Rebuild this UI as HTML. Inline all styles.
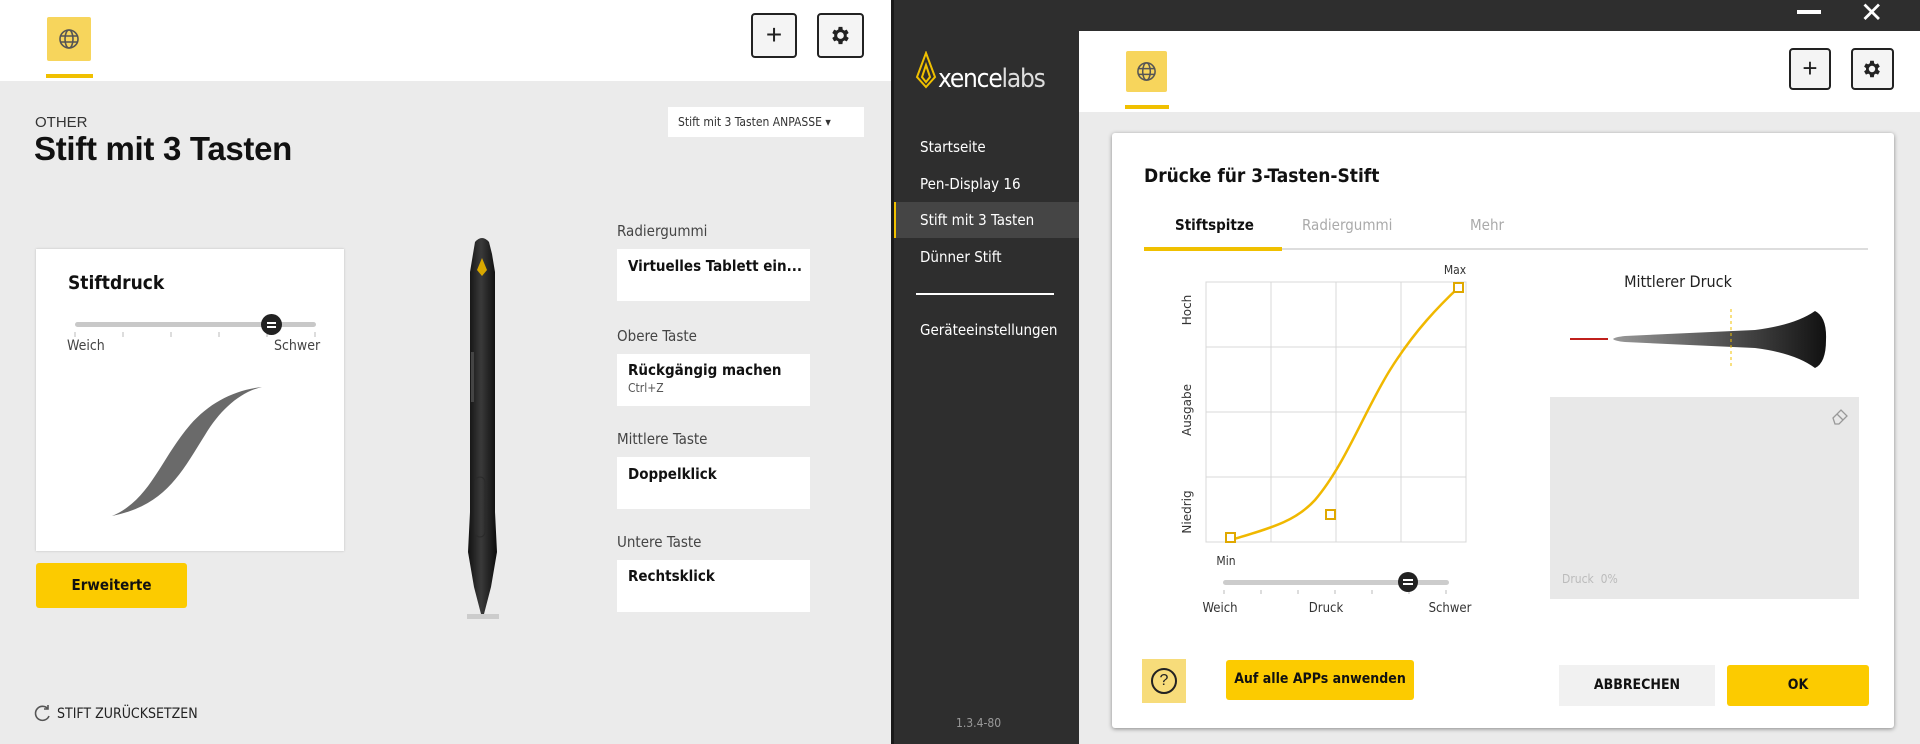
<!DOCTYPE html>
<html><head><meta charset="utf-8"><style>
*{margin:0;padding:0;box-sizing:border-box}
body{width:1920px;height:744px;overflow:hidden;background:#ebebeb;font-family:"Liberation Sans",sans-serif;position:relative}
.a{position:absolute}
.o{font-family:"DejaVu Sans Condensed","Liberation Sans",sans-serif}
.btn{position:absolute;border:2px solid #222;border-radius:4px;background:#f4f4f4}
.box{position:absolute;background:#fff}
.lab{position:absolute;font-size:15px;color:#444;font-family:"DejaVu Sans Condensed","Liberation Sans",sans-serif}
.bt{position:absolute;font-size:15px;font-weight:bold;color:#111;font-family:"DejaVu Sans Condensed","Liberation Sans",sans-serif}
.side{position:absolute;left:920px;color:#fff;font-size:15px;font-family:"DejaVu Sans Condensed","Liberation Sans",sans-serif}
</style></head><body>
<!-- LEFT PANEL -->
<div class="a" style="left:0;top:0;width:891px;height:81px;background:#fff"></div>
<div class="a" style="left:47px;top:17px;width:44px;height:44px;background:#f7d55c;border-radius:2px"></div>
<svg class="a" style="left:58px;top:28px" width="22" height="22" viewBox="0 0 22 22" fill="none" stroke="#555" stroke-width="1.6"><circle cx="11" cy="11" r="9"/><ellipse cx="11" cy="11" rx="4" ry="9"/><line x1="2" y1="8" x2="20" y2="8"/><line x1="2" y1="14" x2="20" y2="14"/></svg>
<div class="a" style="left:46px;top:74px;width:47px;height:4px;background:#f0c000"></div>
<div class="btn" style="left:751px;top:13px;width:46px;height:45px"></div>
<div class="a" style="left:751px;top:13px;width:46px;height:45px;font-size:28px;text-align:center;line-height:43px;color:#222">+</div>
<div class="btn" style="left:817px;top:13px;width:47px;height:45px"></div>
<svg class="a" style="left:829px;top:24px" width="23" height="23" viewBox="0 0 24 24"><path fill="#222" d="M19.4 13a7.5 7.5 0 000-2l2.1-1.6-2-3.5-2.5 1a7.5 7.5 0 00-1.7-1L15 3h-4l-.4 2.9a7.5 7.5 0 00-1.7 1l-2.5-1-2 3.5L6.5 11a7.5 7.5 0 000 2l-2.1 1.6 2 3.5 2.5-1a7.5 7.5 0 001.7 1L11 21h4l.4-2.9a7.5 7.5 0 001.7-1l2.5 1 2-3.5zM13 15.5a3.5 3.5 0 110-7 3.5 3.5 0 010 7z" transform="translate(-1 0)"/></svg>

<div class="a" style="left:35px;top:114px;font-size:15px;color:#333">OTHER</div>
<div class="a" style="left:34px;top:130px;font-size:33px;font-weight:bold;color:#111;letter-spacing:-0.3px">Stift mit 3 Tasten</div>
<div class="box" style="left:668px;top:107px;width:196px;height:30px"></div>
<div class="a o" style="left:678px;top:115px;font-size:12px;color:#333">Stift mit 3 Tasten ANPASSE ▾</div>

<div class="box" style="left:36px;top:249px;width:308px;height:302px;box-shadow:0 0 2px #bbb"></div>
<div class="bt" style="left:68px;top:272px;font-size:19px">Stiftdruck</div>
<div class="a" style="left:75px;top:322px;width:241px;height:5px;background:#c8c8c8;border-radius:3px"></div>
<svg class="a" style="left:74px;top:332px" width="245" height="8"><g stroke="#bbb"><line x1="1" y1="0" x2="1" y2="5"/><line x1="49" y1="0" x2="49" y2="5"/><line x1="97" y1="0" x2="97" y2="5"/><line x1="145" y1="0" x2="145" y2="5"/><line x1="193" y1="0" x2="193" y2="5"/><line x1="241" y1="0" x2="241" y2="5"/></g></svg>
<div class="a" style="left:261px;top:314px;width:21px;height:21px;border-radius:50%;background:#222"></div>
<div class="a" style="left:267px;top:322px;width:9px;height:2px;background:#fff"></div><div class="a" style="left:267px;top:326px;width:9px;height:2px;background:#fff"></div>
<div class="lab" style="left:67px;top:338px;font-size:14px">Weich</div>
<div class="lab" style="left:274px;top:338px;font-size:14px">Schwer</div>
<svg class="a" style="left:100px;top:380px" width="170" height="145"><path fill="#6a6a6a" d="M12 136 C50 120 60 80 90 45 C110 22 135 10 162 7 C140 12 120 30 105 55 C80 95 65 125 12 136Z"/></svg>
<div class="a" style="left:36px;top:563px;width:151px;height:45px;background:#fccb00;border-radius:3px"></div>
<div class="bt" style="left:36px;top:576px;width:151px;text-align:center;font-size:15px">Erweiterte</div>
<svg class="a" style="left:34px;top:704px" width="18" height="18" viewBox="0 0 18 18" fill="none" stroke="#555" stroke-width="1.6"><path d="M14 5a7 7 0 10 1 7"/><path d="M14 1v4h-4"/></svg>
<div class="a o" style="left:57px;top:706px;font-size:14px;color:#222">STIFT ZURÜCKSETZEN</div>

<!-- pen -->
<svg class="a" style="left:455px;top:232px" width="55" height="390" viewBox="0 0 55 390">
<defs><linearGradient id="pg" x1="0" x2="1"><stop offset="0" stop-color="#111"/><stop offset=".45" stop-color="#3a3a3a"/><stop offset="1" stop-color="#0c0c0c"/></linearGradient></defs>
<path fill="url(#pg)" d="M20 10 Q27 2 34 10 L37 22 L40 40 L40 280 L42 320 L36 355 L29 382 L26 382 L19 355 L13 320 L15 280 L15 40 L18 22Z"/>
<path fill="#444" d="M16 120h3v50h-3z"/>
<path fill="#d9a800" d="M27 26 L32 38 L27 44 L22 38Z"/>
<rect x="20" y="245" width="10" height="60" rx="5" fill="none" stroke="#2a2a2a"/>
<rect x="12" y="382" width="32" height="5" fill="#ccc"/>
</svg>

<div class="lab" style="left:617px;top:222px">Radiergummi</div>
<div class="box" style="left:617px;top:249px;width:193px;height:52px"></div>
<div class="bt" style="left:628px;top:257px">Virtuelles Tablett ein...</div>
<div class="lab" style="left:617px;top:327px">Obere Taste</div>
<div class="box" style="left:617px;top:354px;width:193px;height:52px"></div>
<div class="bt" style="left:628px;top:361px">Rückgängig machen</div>
<div class="a o" style="left:628px;top:381px;font-size:12px;color:#555">Ctrl+Z</div>
<div class="lab" style="left:617px;top:430px">Mittlere Taste</div>
<div class="box" style="left:617px;top:457px;width:193px;height:52px"></div>
<div class="bt" style="left:628px;top:465px">Doppelklick</div>
<div class="lab" style="left:617px;top:533px">Untere Taste</div>
<div class="box" style="left:617px;top:560px;width:193px;height:52px"></div>
<div class="bt" style="left:628px;top:567px">Rechtsklick</div>

<!-- RIGHT APP -->
<div class="a" style="left:891px;top:0;width:1029px;height:744px;background:#2e2e2e"></div>
<div class="a" style="left:891px;top:0;width:3px;height:744px;background:#1a1a1a"></div>
<div class="a" style="left:1797px;top:10px;width:24px;height:4px;background:#fff"></div>
<div class="a" style="left:1860px;top:-4px;font-size:28px;color:#fff">✕</div>
<svg class="a" style="left:915px;top:51px" width="22" height="38" viewBox="0 0 22 38" fill="none" stroke="#f0c000" stroke-width="2"><path d="M11 2 L20 26 L11 36 L2 26Z"/><path d="M11 14 L15 26 L11 31 L7 26Z"/></svg>
<div class="a" style="left:938px;top:64px;font-size:26px;color:#fff;letter-spacing:-1.2px;font-family:'DejaVu Sans Condensed',sans-serif">xence<span style="color:#ddd">labs</span></div>
<div class="side" style="left:920px;top:138px">Startseite</div>
<div class="side" style="top:175px">Pen-Display 16</div>
<div class="a" style="left:894px;top:202px;width:185px;height:36px;background:#454545"></div>
<div class="a" style="left:894px;top:202px;width:2px;height:36px;background:#f0c000"></div>
<div class="side" style="top:211px">Stift mit 3 Tasten</div>
<div class="side" style="top:248px">Dünner Stift</div>
<div class="a" style="left:916px;top:293px;width:138px;height:2px;background:#fff"></div>
<div class="side" style="top:321px">Geräteeinstellungen</div>
<div class="a o" style="left:956px;top:716px;font-size:12px;color:#999">1.3.4-80</div>

<div class="a" style="left:1079px;top:31px;width:841px;height:713px;background:#ebebeb"></div>
<div class="a" style="left:1079px;top:31px;width:841px;height:81px;background:#fff"></div>
<div class="a" style="left:1126px;top:51px;width:41px;height:41px;background:#f7d55c;border-radius:2px"></div>
<svg class="a" style="left:1136px;top:61px" width="21" height="21" viewBox="0 0 22 22" fill="none" stroke="#555" stroke-width="1.6"><circle cx="11" cy="11" r="9"/><ellipse cx="11" cy="11" rx="4" ry="9"/><line x1="2" y1="8" x2="20" y2="8"/><line x1="2" y1="14" x2="20" y2="14"/></svg>
<div class="a" style="left:1125px;top:105px;width:44px;height:4px;background:#f0c000"></div>
<div class="btn" style="left:1789px;top:48px;width:42px;height:42px"></div>
<div class="a" style="left:1789px;top:48px;width:42px;height:42px;font-size:26px;text-align:center;line-height:40px;color:#222">+</div>
<div class="btn" style="left:1851px;top:48px;width:43px;height:42px"></div>
<svg class="a" style="left:1861px;top:58px" width="22" height="22" viewBox="0 0 24 24"><path fill="#222" d="M19.4 13a7.5 7.5 0 000-2l2.1-1.6-2-3.5-2.5 1a7.5 7.5 0 00-1.7-1L15 3h-4l-.4 2.9a7.5 7.5 0 00-1.7 1l-2.5-1-2 3.5L6.5 11a7.5 7.5 0 000 2l-2.1 1.6 2 3.5 2.5-1a7.5 7.5 0 001.7 1L11 21h4l.4-2.9a7.5 7.5 0 001.7-1l2.5 1 2-3.5zM13 15.5a3.5 3.5 0 110-7 3.5 3.5 0 010 7z" transform="translate(-1 0)"/></svg>

<div class="a" style="left:1112px;top:133px;width:782px;height:595px;background:#fff;border-radius:3px;box-shadow:0 1px 4px #888"></div>
<div class="bt" style="left:1144px;top:165px;font-size:19px">Drücke für 3-Tasten-Stift</div>
<div class="bt" style="left:1175px;top:216px;font-size:15px">Stiftspitze</div>
<div class="a o" style="left:1302px;top:216px;font-size:15px;color:#aaa">Radiergummi</div>
<div class="a o" style="left:1470px;top:216px;font-size:15px;color:#aaa">Mehr</div>
<div class="a" style="left:1144px;top:248px;width:724px;height:2px;background:#ddd"></div>
<div class="a" style="left:1144px;top:247px;width:138px;height:4px;background:#f0c000"></div>

<svg class="a" style="left:1170px;top:260px" width="320" height="360">
<g stroke="#d8d8d8" fill="none"><rect x="36" y="22" width="260" height="260"/><line x1="101" y1="22" x2="101" y2="282"/><line x1="166" y1="22" x2="166" y2="282"/><line x1="231" y1="22" x2="231" y2="282"/><line x1="36" y1="87" x2="296" y2="87"/><line x1="36" y1="152" x2="296" y2="152"/><line x1="36" y1="217" x2="296" y2="217"/></g>
<path d="M61 280 C100 268 125 262 145 240 C175 205 195 150 220 110 C245 70 270 45 289 27" stroke="#f0b800" stroke-width="2.5" fill="none"/>
<g stroke="#e0a800" stroke-width="2" fill="#fff"><rect x="56" y="273" width="9" height="9"/><rect x="156" y="250" width="9" height="9"/><rect x="284" y="23" width="9" height="9"/></g>
<text x="285" y="14" font-size="12" fill="#333" font-family="DejaVu Sans Condensed,sans-serif" text-anchor="middle">Max</text>
<text x="56" y="305" font-size="12" fill="#333" font-family="DejaVu Sans Condensed,sans-serif" text-anchor="middle">Min</text>
<g font-size="12" fill="#333" font-family="DejaVu Sans,sans-serif" text-anchor="middle"><text transform="translate(21 50) rotate(-90)">Hoch</text><text transform="translate(21 150) rotate(-90)">Ausgabe</text><text transform="translate(21 252) rotate(-90)">Niedrig</text></g>
<rect x="53" y="320" width="226" height="5" rx="2.5" fill="#ccc"/>
<g stroke="#bbb"><line x1="54" y1="330" x2="54" y2="334"/><line x1="91" y1="330" x2="91" y2="334"/><line x1="128" y1="330" x2="128" y2="334"/><line x1="165" y1="330" x2="165" y2="334"/><line x1="202" y1="330" x2="202" y2="334"/><line x1="239" y1="330" x2="239" y2="334"/><line x1="276" y1="330" x2="276" y2="334"/></g>
<circle cx="238" cy="322" r="10" fill="#222"/><rect x="233" y="319" width="10" height="2" fill="#fff"/><rect x="233" y="323" width="10" height="2" fill="#fff"/>
<g font-size="13" fill="#333" font-family="DejaVu Sans Condensed,sans-serif" text-anchor="middle"><text x="50" y="352">Weich</text><text x="156" y="352">Druck</text><text x="280" y="352">Schwer</text></g>
</svg>

<div class="a o" style="left:1578px;top:272px;width:200px;text-align:center;font-size:16px;color:#222">Mittlerer Druck</div>
<svg class="a" style="left:1565px;top:305px" width="270" height="70">
<defs><linearGradient id="bg" x1="0" x2="1"><stop offset="0" stop-color="#999"/><stop offset="1" stop-color="#111"/></linearGradient></defs>
<line x1="5" y1="34" x2="43" y2="34" stroke="#c0201c" stroke-width="2"/>
<path d="M48 34 Q50 32 60 31 L190 25 Q230 20 250 6 Q262 12 261 35 Q261 58 250 63 Q230 48 190 43 L60 37 Q50 36 48 34Z" fill="url(#bg)"/>
<line x1="166" y1="4" x2="166" y2="64" stroke="#f0c000" stroke-dasharray="3 3"/>
</svg>
<div class="a" style="left:1550px;top:397px;width:309px;height:202px;background:#e8e8e8"></div>
<svg class="a" style="left:1830px;top:406px" width="20" height="20" viewBox="0 0 20 20" fill="none" stroke="#999" stroke-width="1.3"><path d="M3 12 L11 4 L17 10 L9 18 L5 18 Z"/><path d="M7 8 L13 14"/></svg>
<div class="a o" style="left:1562px;top:572px;font-size:12px;color:#bbb">Druck&nbsp;&nbsp;0%</div>

<div class="a" style="left:1142px;top:659px;width:44px;height:44px;background:#f7dc7a"></div>
<div class="a" style="left:1151px;top:668px;width:26px;height:26px;border:2px solid #222;border-radius:50%;text-align:center;font-size:16px;line-height:22px;color:#222">?</div>
<div class="a" style="left:1226px;top:660px;width:188px;height:40px;background:#fccb00;border-radius:3px"></div>
<div class="bt" style="left:1226px;top:671px;width:188px;text-align:center;font-size:14px">Auf alle APPs anwenden</div>
<div class="a" style="left:1559px;top:665px;width:156px;height:41px;background:#f1f1f1"></div>
<div class="bt" style="left:1559px;top:677px;width:156px;text-align:center;font-size:14px">ABBRECHEN</div>
<div class="a" style="left:1727px;top:665px;width:142px;height:41px;background:#fccb00;border-radius:3px"></div>
<div class="bt" style="left:1727px;top:677px;width:142px;text-align:center;font-size:14px">OK</div>
</body></html>
